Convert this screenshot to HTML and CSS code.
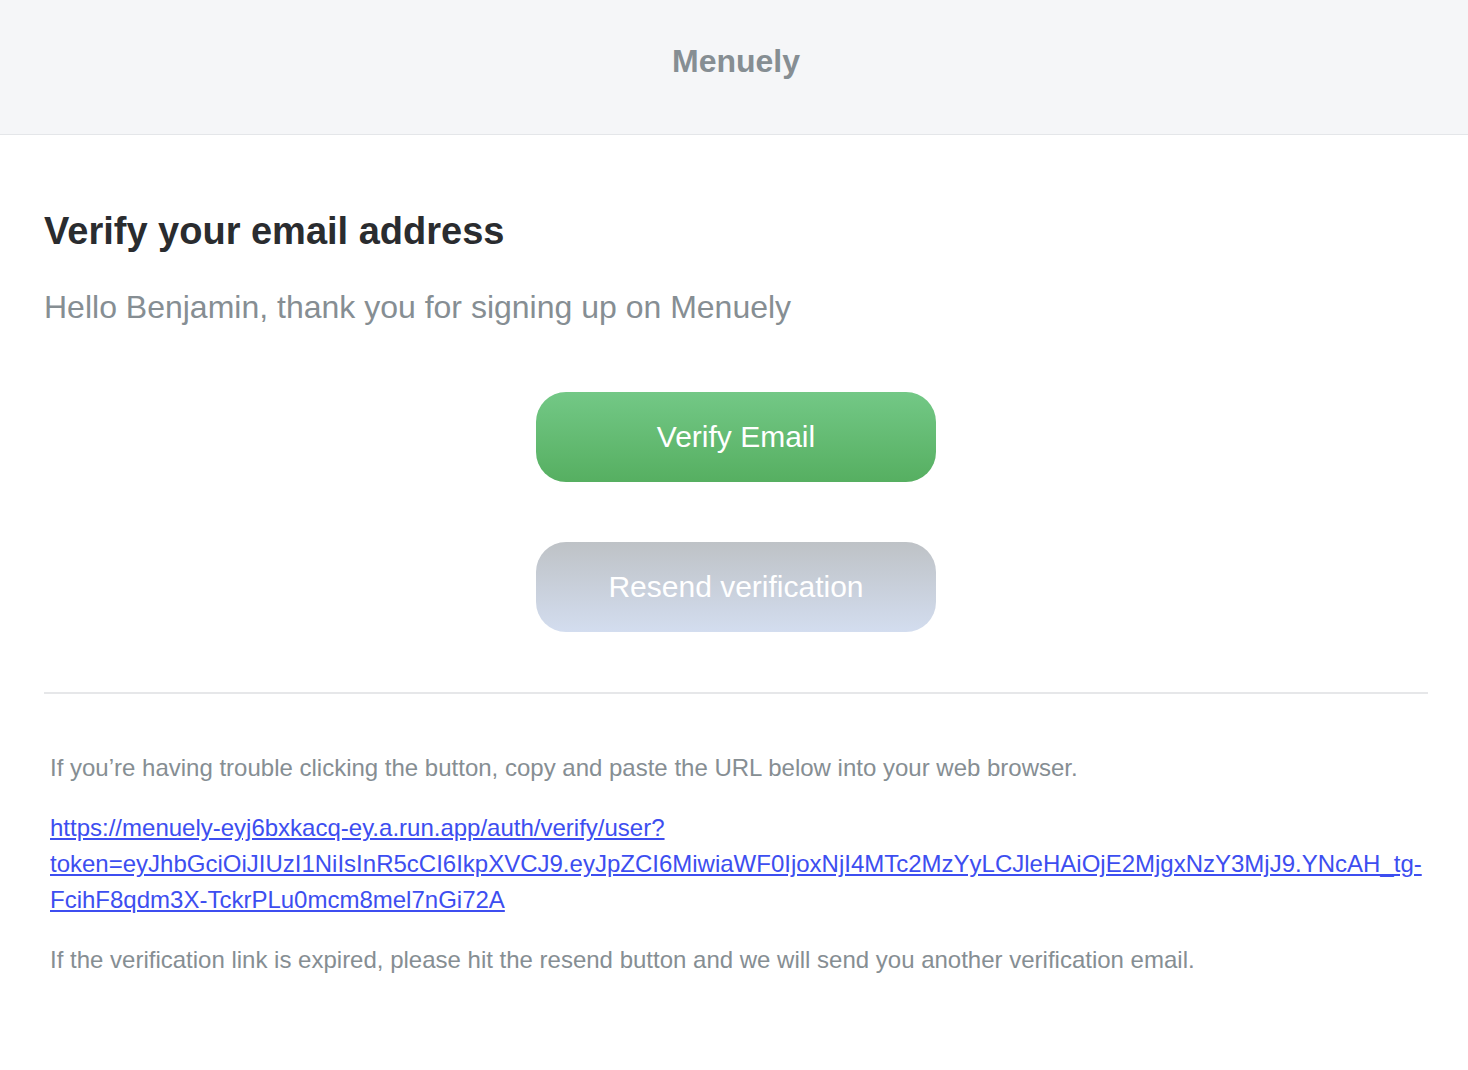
FILE: index.html
```html
<!DOCTYPE html>
<html>
<head>
<meta charset="utf-8">
<title>Verify your email address</title>
<link rel="stylesheet" href="styles.css">
</head>
<body>
<header class="top">
  <div class="brand">Menuely</div>
</header>
<main class="content">
  <h1 class="title">Verify your email address</h1>
  <p class="lead">Hello Benjamin, thank you for signing up on Menuely</p>
  <div class="actions">
    <a class="btn btn-green" href="#">Verify Email</a>
    <a class="btn btn-gray" href="#">Resend verification</a>
  </div>
  <hr class="divider">
  <div class="foot">
    <p class="note">If you’re having trouble clicking the button, copy and paste the URL below into your web browser.</p>
    <p class="url"><a href="#">https://menuely-eyj6bxkacq-ey.a.run.app/auth/verify/user?token=eyJhbGciOiJIUzI1NiIsInR5cCI6IkpXVCJ9.eyJpZCI6MiwiaWF0IjoxNjI4MTc2MzYyLCJleHAiOjE2MjgxNzY3MjJ9.YNcAH_tg-FcihF8qdm3X-TckrPLu0mcm8mel7nGi72A</a></p>
    <p class="note">If the verification link is expired, please hit the resend button and we will send you another verification email.</p>
  </div>
</main>
</body>
</html>
```
FILE: styles.css
```css
html, body {
  margin: 0;
  padding: 0;
  background: #ffffff;
  font-family: "Liberation Sans", Arial, Helvetica, sans-serif;
}
.top {
  height: 134px;
  background: #f5f6f8;
  border-bottom: 1px solid #e4e6e9;
  display: flex;
  justify-content: center;
  align-items: flex-start;
  padding-left: 4px;
}
.brand {
  margin-top: 42px;
  font-size: 32px;
  line-height: 38px;
  font-weight: 700;
  color: #868e93;
}
.content {
  padding: 73px 40px 40px 44px;
}
.title {
  margin: 0;
  font-size: 38px;
  line-height: 46px;
  font-weight: 700;
  color: #2a2c2f;
}
.lead {
  margin: 35px 0 0;
  font-size: 32px;
  line-height: 36px;
  color: #868e93;
}
.actions {
  margin-top: 67px;
  display: flex;
  flex-direction: column;
  align-items: center;
  gap: 60px;
}
.btn {
  display: flex;
  align-items: center;
  justify-content: center;
  width: 400px;
  height: 90px;
  border-radius: 30px;
  font-size: 30px;
  color: #ffffff;
  text-decoration: none;
}
.btn-green {
  background: linear-gradient(to bottom, #73c886, #56af61);
}
.btn-gray {
  background: linear-gradient(to bottom, #bec2c6, #d3ddef);
}
.divider {
  margin: 60px 0 0;
  border: 0;
  border-top: 2px solid #e6e7e9;
}
.foot {
  padding: 56px 6px 0;
}
.note {
  margin: 0;
  font-size: 24px;
  line-height: 36px;
  color: #868e93;
}
.url {
  margin: 24px 0 24px;
  font-size: 24px;
  line-height: 36px;
}
.url a {
  color: #3d4ef0;
  text-decoration: underline;
}
```
